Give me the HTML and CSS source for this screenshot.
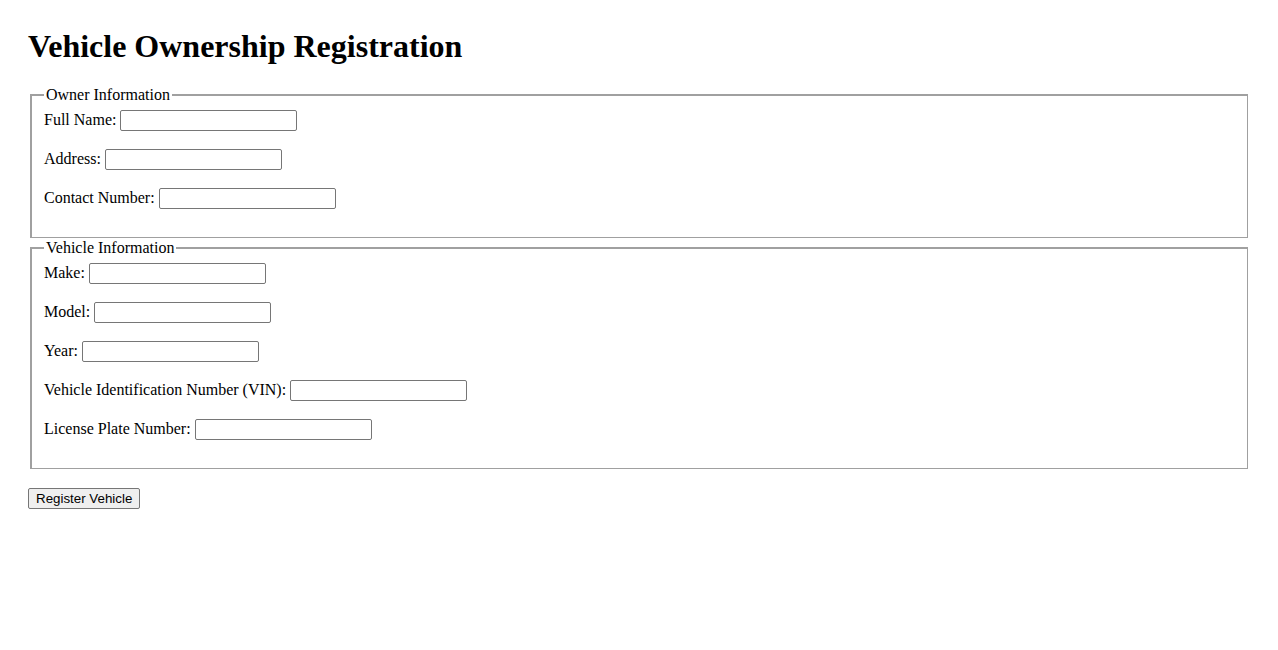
FILE: index.html
```html
<!DOCTYPE html>
<html lang="en">
<head>
    <meta charset="UTF-8">
    <meta name="viewport" content="width=device-width, initial-scale=1.0">
    <title>Vehicle Ownership Registration</title>
    <link rel="stylesheet" href="styles.css">
</head>
<body>
    <h1>Vehicle Ownership Registration</h1>
    <form class="reg-form">
        <fieldset>
            <legend>Owner Information</legend>
            <label for="fullName">Full Name:</label>
            <input type="text" id="fullName" name="fullName"><br><br>
            <label for="address">Address:</label>
            <input type="text" id="address" name="address"><br><br>
            <label for="contact">Contact Number:</label>
            <input type="text" id="contact" name="contact"><br><br>
        </fieldset>
        <fieldset>
            <legend>Vehicle Information</legend>
            <label for="make">Make:</label>
            <input type="text" id="make" name="make"><br><br>
            <label for="model">Model:</label>
            <input type="text" id="model" name="model"><br><br>
            <label for="year">Year:</label>
            <input type="text" id="year" name="year"><br><br>
            <label for="vin">Vehicle Identification Number (VIN):</label>
            <input type="text" id="vin" name="vin"><br><br>
            <label for="plate">License Plate Number:</label>
            <input type="text" id="plate" name="plate"><br><br>
        </fieldset>
        <button type="submit" class="btn">Register Vehicle</button>
    </form>
</body>
</html>
```

FILE: styles.css
```css
body {
    margin: 28px;
    font-family: "Liberation Serif", "Times New Roman", serif;
    font-size: 16px;
    color: #000;
    background: #fff;
}

h1 {
    font-size: 32px;
    font-weight: bold;
    margin: 0 0 21px;
}

fieldset {
    margin: 0 2px;
    padding: 6px 12px 10px;
    border: 1px solid #a0a0a0;
    border-width: 2px 1px 1px 2px;
    border-color: #a0a0a0;
}

fieldset + fieldset {
    margin-top: 1px;
}

legend {
    padding: 0 2px;
}

input[type="text"] {
    font-family: "Liberation Sans", Arial, sans-serif;
    font-size: 13px;
    width: 171px;
    height: 17px;
    padding: 1px 2px;
    border: 1px solid #767676;
    border-radius: 2px;
    vertical-align: baseline;
}

.btn {
    margin-top: 19px;
    font-family: "Liberation Sans", Arial, sans-serif;
    font-size: 13.333px;
    padding: 2px 7px;
    background: #efefef;
    border: 1px solid #767676;
    border-radius: 2px;
    color: #000;
}
```
